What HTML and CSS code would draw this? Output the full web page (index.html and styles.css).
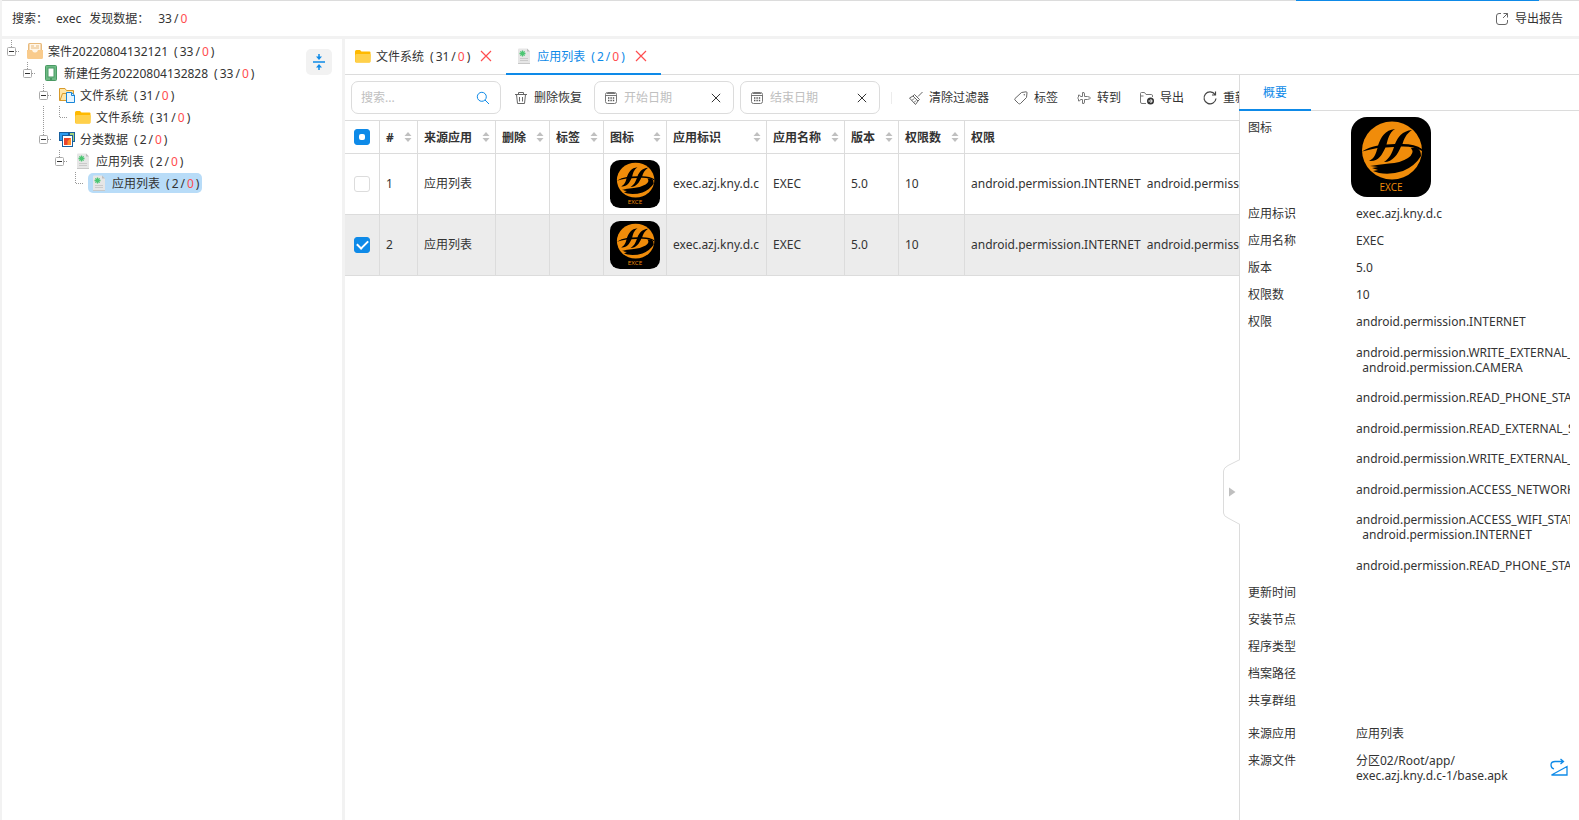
FILE: index.html
```
<!DOCTYPE html>
<html lang="zh-CN">
<head>
    <meta charset="UTF-8">
    <meta name="viewport" content="width=device-width, initial-scale=1.0">
    <title>数据分析</title>
    <link rel="stylesheet" href="styles.css">
</head>
<body>
    <!-- 公用图标 -->
    <svg class="symbols" aria-hidden="true">
        <symbol id="i-folder" viewBox="0 0 16 16">
            <path d="M0 3.500Q0 2 1.500 2H5l1.500 1.500H14.500Q15.500 3.500 15.500 4.500V13.500Q15.500 14.500 14.500 14.500H1.500Q0 14.500 0 13z" fill="#ffb900"/>
            <path d="M1.500 6H14.500Q16 6 15.800 7L15.200 13.500Q15 14.500 14 14.500H1.500Q.3 14.500.3 13.500V7.500Q.3 6 1.500 6z" fill="#ffd04a"/>
        </symbol>
        <symbol id="i-doc" viewBox="0 0 16 16">
            <path d="M2 1.500Q2 .5 3 .5H11L14 3.500V14.500Q14 15.500 13 15.500H3Q2 15.500 2 14.500z" fill="#e6e6e6"/>
            <path d="M11 .5V3.500H14z" fill="#bdbdbd"/>
            <path d="M2 15.500H14" stroke="#c8c8c8"/>
            <path d="M3.500 5.500h6M6.500 2.500v6M4.400 3.400L8.600 7.600M8.600 3.400L4.400 7.600" stroke="#4cc673" stroke-width="1.300"/>
            <path d="M4 10.500h8M4 12.500h8" stroke="#cacaca"/>
        </symbol>
        <symbol id="i-close" viewBox="0 0 12 12">
            <path d="M1 1L11 11M11 1L1 11" fill="none" stroke="currentColor" stroke-width="1.200"/>
        </symbol>
        <symbol id="i-calendar" viewBox="0 0 16 16">
            <g fill="none" stroke="#777"><rect x="2.500" y="2.500" width="11" height="11" rx="2"/><path d="M2.500 5.500h11M4 3.500h8"/></g>
            <path d="M5 8h1.400M7.400 8h1.400M9.800 8h1.400M5 10.500h1.400M7.400 10.500h1.400M9.800 10.500h1.400" stroke="#555" stroke-width="1.300"/>
        </symbol>
        <symbol id="i-minus" viewBox="0 0 16 22">
            <g fill="none" stroke="#999" stroke-dasharray="1 1"><path d="M5.500 0V7M10 11.500H14"/></g>
            <rect x="1.500" y="7.500" width="8" height="8" rx="1" fill="#fff" stroke="#aaa"/>
            <path d="M3 11.500H8" stroke="#333"/>
        </symbol>
        <symbol id="i-leaf" viewBox="0 0 16 22">
            <path d="M5.500 0V11.500H14" fill="none" stroke="#999" stroke-dasharray="1 1"/>
        </symbol>
        <symbol id="i-sort" viewBox="0 0 8 12">
            <path d="M4 1L7.500 5H.5zM4 11L7.500 7H.5z" fill="#c0c0c0"/>
        </symbol>
        <symbol id="i-app" viewBox="0 0 80 80" preserveAspectRatio="none">
            <rect width="80" height="80" rx="16"/>
            <ellipse cx="41" cy="33.500" rx="30" ry="29" fill="#f08c0a"/>
            <path d="M11 34.500Q18 30 27 28.500C30 20 34 13 44 12C38 16 37 22 35.500 27.500L44 27C47 20 51 14 61 13C55 17 53 22 51.500 27Q64 27 71 32L71 34Q63 29 50 29.500C47 37 42 45 33 45C39 41 41 36 43 30L34.500 30.500C31 38 27 45 18 44C24 41 25 36 26.500 31Q18 32.500 11 34.500z"/>
            <path d="M60 31Q64 36 57 41Q49 46 38 46.500Q27 47.500 19 49L27 50L21 51L27 53L22 54L28 56Q40 58 52 54Q64 49 70 39Q70 33 66 31z"/>
            <text x="40" y="74" text-anchor="middle" class="app-name">EXCE</text>
        </symbol>
    </svg>

    <header class="topbar">
        <span>搜索：</span>
        <span class="topbar-key">exec</span>
        <span>发现数据：</span>
        <span class="count"><span>33</span><span>/</span><b>0</b></span>
        <button class="report-btn" type="button">
            <svg width="14" height="14" viewBox="0 0 14 14"><path d="M6 1.500H4Q1.500 1.500 1.500 4V10Q1.500 12.500 4 12.500H10Q12.500 12.500 12.500 10V8M8.500 1.500H12.500V5.500M12.500 1.500L8 6" fill="none" stroke="#666"/></svg>
            导出报告
        </button>
    </header>

    <div class="layout">
        <aside class="sidebar">
            <div class="tree">
                <div class="node">
                    <svg class="toggle"><use href="#i-minus"/></svg>
                    <a class="node-label" href="#">
                        <svg width="16" height="16" viewBox="0 0 16 16"><rect x="1" y="0" width="14" height="9" rx="1.500" fill="#e8ba7c"/><rect x="2.500" y="1" width="11" height="8" fill="#fff6e8"/><path d="M4 3h3M9 3h3M4 5h8" stroke="#e8ba7c"/><path d="M0 7H5Q5.500 9.500 8 9.500T11 7H16V14.500Q16 16 14.500 16H1.500Q0 16 0 14.500z" fill="#f9cb8c"/></svg>
                        案件20220804132121
                        <span class="count"><span>(</span><span>33</span><span>/</span><b>0</b><span>)</span></span>
                    </a>
                </div>
                <div class="node">
                    <span class="indent"></span>
                    <svg class="toggle"><use href="#i-minus"/></svg>
                    <a class="node-label" href="#">
                        <svg width="16" height="16" viewBox="0 0 16 16"><rect x="2.500" y=".5" width="11" height="15" rx="1" fill="#6dba84" stroke="#4a9a64"/><rect x="5" y="3" width="6" height="9" fill="#fff" stroke="#4a9a64"/><path d="M7 14h2" stroke="#2f7246"/></svg>
                        新建任务20220804132828
                        <span class="count"><span>(</span><span>33</span><span>/</span><b>0</b><span>)</span></span>
                    </a>
                </div>
                <div class="node">
                    <span class="indent"></span><span class="indent"></span>
                    <svg class="toggle"><use href="#i-minus"/></svg>
                    <a class="node-label" href="#">
                        <svg width="16" height="16" viewBox="0 0 16 16"><path d="M.5 13.500V1.500H6L7.500 3.500H14.500V13.500z" fill="#ffe6a6" stroke="#d79a2b"/><path d="M1 13.500L3.500 6.500H15" fill="none" stroke="#d79a2b"/><path d="M7.500 5.500H12.500L15.500 8V15.500H7.500z" fill="#e6f5ff" stroke="#1886d8"/><path d="M12.500 5.500V8.500H15.500" fill="none" stroke="#1886d8"/></svg>
                        文件系统
                        <span class="count"><span>(</span><span>31</span><span>/</span><b>0</b><span>)</span></span>
                    </a>
                </div>
                <div class="node">
                    <span class="indent"></span><span class="indent"></span>
                    <span class="indent indent-line"></span>
                    <svg class="toggle"><use href="#i-leaf"/></svg>
                    <a class="node-label" href="#">
                        <svg width="16" height="16"><use href="#i-folder"/></svg>
                        文件系统
                        <span class="count"><span>(</span><span>31</span><span>/</span><b>0</b><span>)</span></span>
                    </a>
                </div>
                <div class="node">
                    <span class="indent"></span><span class="indent"></span>
                    <svg class="toggle"><use href="#i-minus"/></svg>
                    <a class="node-label" href="#">
                        <svg width="16" height="16" viewBox="0 0 16 16"><rect x=".5" y="1.500" width="9" height="8" fill="#2c9cf0" stroke="#185f9e"/><rect x="10.500" y="1.500" width="5" height="9" fill="#a4d07c" stroke="#185f9e"/><rect x="3.500" y="4.500" width="10" height="11" fill="#fff" stroke="#185f9e"/><rect x="5" y="7" width="7" height="7" fill="#e8452c"/><path d="M8.500 10L12 7V14H8.500z" fill="#ff8a2a"/></svg>
                        分类数据
                        <span class="count"><span>(</span><span>2</span><span>/</span><b>0</b><span>)</span></span>
                    </a>
                </div>
                <div class="node">
                    <span class="indent"></span><span class="indent"></span><span class="indent"></span>
                    <svg class="toggle"><use href="#i-minus"/></svg>
                    <a class="node-label" href="#">
                        <svg width="16" height="16"><use href="#i-doc"/></svg>
                        应用列表
                        <span class="count"><span>(</span><span>2</span><span>/</span><b>0</b><span>)</span></span>
                    </a>
                </div>
                <div class="node">
                    <span class="indent"></span><span class="indent"></span><span class="indent"></span><span class="indent"></span>
                    <svg class="toggle"><use href="#i-leaf"/></svg>
                    <a class="node-label selected" href="#">
                        <svg width="16" height="16"><use href="#i-doc"/></svg>
                        应用列表
                        <span class="count"><span>(</span><span>2</span><span>/</span><b>0</b><span>)</span></span>
                    </a>
                </div>
            </div>
            <button class="collapse-btn" type="button" aria-label="全部折叠">
                <svg width="14" height="18" viewBox="0 0 14 18"><path d="M1 9H13M7 1V5M7 17V13" stroke="#0e8ae8" stroke-width="1.500"/><path d="M4 3.500H10L7 7zM4 14.500H10L7 11z" fill="#0e8ae8"/></svg>
            </button>
        </aside>

        <main class="main">
            <nav class="tabs">
                <div class="tab">
                    <a href="#">
                        <svg width="16" height="16"><use href="#i-folder"/></svg>
                        文件系统
                        <span class="count"><span>(</span><span>31</span><span>/</span><b>0</b><span>)</span></span>
                    </a>
                    <button class="tab-close" type="button" aria-label="关闭"><svg width="12" height="12"><use href="#i-close"/></svg></button>
                </div>
                <div class="tab active">
                    <a href="#">
                        <svg width="16" height="16"><use href="#i-doc"/></svg>
                        应用列表
                        <span class="count"><span>(</span><span>2</span><span>/</span><b>0</b><span>)</span></span>
                    </a>
                    <button class="tab-close" type="button" aria-label="关闭"><svg width="12" height="12"><use href="#i-close"/></svg></button>
                </div>
            </nav>

            <div class="content">
                <section class="list">
                    <div class="toolbar">
                        <label class="field search">
                            <input type="text" placeholder="搜索..." aria-label="搜索">
                            <svg width="14" height="14" viewBox="0 0 14 14"><path d="M9 9L13 13" stroke="#0e8ae8"/><circle cx="5.800" cy="5.800" r="4.500" fill="none" stroke="#0e8ae8"/></svg>
                        </label>
                        <button class="tool" type="button">
                            <svg width="16" height="16" viewBox="0 0 16 16"><path d="M2 4.500H14M5.500 4V2.500H10.500V4M3.500 4.500L4.500 13.500H11.500L12.500 4.500M6.500 7V11.500M9.500 7V11.500" fill="none" stroke="#666"/></svg>
                            删除恢复
                        </button>
                        <label class="field date">
                            <svg width="16" height="16"><use href="#i-calendar"/></svg>
                            <input type="text" placeholder="开始日期" aria-label="开始日期">
                            <button type="button" aria-label="清空"><svg width="10" height="10"><use href="#i-close"/></svg></button>
                        </label>
                        <label class="field date">
                            <svg width="16" height="16"><use href="#i-calendar"/></svg>
                            <input type="text" placeholder="结束日期" aria-label="结束日期">
                            <button type="button" aria-label="清空"><svg width="10" height="10"><use href="#i-close"/></svg></button>
                        </label>
                        <span class="separator"></span>
                        <button class="tool tool-filter" type="button">
                            <svg width="16" height="16" viewBox="0 0 16 16"><path d="M14.500 2L10 6.500M6.500 4.500L11.500 9.500L10 11L5 6zM5 6L1.500 8L7.500 14.500L10 11M4 10.500L6 8.500M6 12.500L8 10.500" fill="none" stroke="#666"/></svg>
                            清除过滤器
                        </button>
                        <button class="tool" type="button">
                            <svg width="16" height="16" viewBox="0 0 16 16"><path d="M8.500 2.500L13 1.800Q14 1.700 14 2.800L13.500 7.500L7.500 13.500Q6.500 14.300 5.500 13.500L2 10Q1.300 9.200 2 8.500z" fill="none" stroke="#666"/><circle cx="11.300" cy="4.700" r=".7" fill="#666"/></svg>
                            标签
                        </button>
                        <button class="tool" type="button">
                            <svg width="16" height="16" viewBox="0 0 16 16"><path d="M6.500 2.500Q8.500 1.800 8.500 4V6.500H11.500Q14.500 7.300 14.500 8T11.500 9.500H8.500V12Q8.500 14.200 6.500 13.500V9.500H4.500L3.500 11H2.500V8.800L1.500 8L2.500 7.200V5H3.500L4.500 6.500H6.500z" fill="none" stroke="#777"/></svg>
                            转到
                        </button>
                        <button class="tool" type="button">
                            <svg width="16" height="16" viewBox="0 0 16 16"><path d="M7 13.500H3Q1.500 13.500 1.500 12V3.500Q1.500 2.500 2.500 2.500H5.500L7 4.500H12.500Q13.500 4.500 13.500 6V7M1.500 6H4.500" fill="none" stroke="#777"/><circle cx="11.500" cy="11" r="3.500" fill="#333"/><path d="M9.500 11H13M11.500 9L13.300 11L11.500 13" fill="none" stroke="#fff"/></svg>
                            导出
                        </button>
                        <button class="tool" type="button">
                            <svg width="16" height="16" viewBox="0 0 16 16"><path d="M13 4.500A6 6 0 1 0 14 8.500M13.500 1.500V5H10" fill="none" stroke="#444" stroke-width="1.200"/></svg>
                            重新加载
                        </button>
                    </div>

                    <table class="grid">
                        <colgroup>
                            <col class="c-check"><col class="c-no"><col class="c-md"><col class="c-sm"><col class="c-sm">
                            <col class="c-icon"><col class="c-lg"><col class="c-md"><col class="c-sm"><col class="c-num"><col>
                        </colgroup>
                        <thead>
                            <tr>
                                <th><input class="check partial" type="checkbox" aria-label="全选"></th>
                                <th><div>#<svg><use href="#i-sort"/></svg></div></th>
                                <th><div>来源应用<svg><use href="#i-sort"/></svg></div></th>
                                <th><div>删除<svg><use href="#i-sort"/></svg></div></th>
                                <th><div>标签<svg><use href="#i-sort"/></svg></div></th>
                                <th><div>图标<svg><use href="#i-sort"/></svg></div></th>
                                <th><div>应用标识<svg><use href="#i-sort"/></svg></div></th>
                                <th><div>应用名称<svg><use href="#i-sort"/></svg></div></th>
                                <th><div>版本<svg><use href="#i-sort"/></svg></div></th>
                                <th><div>权限数<svg><use href="#i-sort"/></svg></div></th>
                                <th><div>权限</div></th>
                            </tr>
                        </thead>
                        <tbody>
                            <tr>
                                <td><input class="check" type="checkbox" aria-label="选择第1行"></td>
                                <td>1</td>
                                <td>应用列表</td>
                                <td></td>
                                <td></td>
                                <td><svg class="app-icon"><use href="#i-app"/></svg></td>
                                <td>exec.azj.kny.d.c</td>
                                <td>EXEC</td>
                                <td>5.0</td>
                                <td>10</td>
                                <td>android.permission.INTERNET&nbsp; android.permission.WRITE_EXTERNAL_STORAGE</td>
                            </tr>
                            <tr class="selected">
                                <td><input class="check" type="checkbox" aria-label="选择第2行" checked></td>
                                <td>2</td>
                                <td>应用列表</td>
                                <td></td>
                                <td></td>
                                <td><svg class="app-icon"><use href="#i-app"/></svg></td>
                                <td>exec.azj.kny.d.c</td>
                                <td>EXEC</td>
                                <td>5.0</td>
                                <td>10</td>
                                <td>android.permission.INTERNET&nbsp; android.permission.WRITE_EXTERNAL_STORAGE</td>
                            </tr>
                        </tbody>
                    </table>
                </section>

                <aside class="detail">
                    <button class="drawer-handle" type="button" aria-label="收起">
                        <svg width="17" height="66" viewBox="0 0 17 66"><path d="M17 .5L5 6.500Q.5 9 .5 12V54Q.5 57 5 59L17 65.500" fill="#fff" stroke="#dcdcdc"/><path d="M6 28.500L12.500 33L6 37.500z" fill="#bfbfbf"/></svg>
                    </button>
                    <div class="detail-tabs"><a href="#">概要</a></div>
                    <dl class="props">
                        <div class="prop prop-icon"><dt>图标</dt><dd><svg width="80" height="80"><use href="#i-app"/></svg></dd></div>
                        <div class="prop"><dt>应用标识</dt><dd>exec.azj.kny.d.c</dd></div>
                        <div class="prop"><dt>应用名称</dt><dd>EXEC</dd></div>
                        <div class="prop"><dt>版本</dt><dd>5.0</dd></div>
                        <div class="prop"><dt>权限数</dt><dd>10</dd></div>
                        <div class="prop">
                            <dt>权限</dt>
                            <dd class="permissions">
                                <p>android.permission.INTERNET</p>
                                <p>android.permission.WRITE_EXTERNAL_STORAGE<br>&nbsp; android.permission.CAMERA</p>
                                <p>android.permission.READ_PHONE_STATE</p>
                                <p>android.permission.READ_EXTERNAL_STORAGE</p>
                                <p>android.permission.WRITE_EXTERNAL_STORAGE</p>
                                <p>android.permission.ACCESS_NETWORK_STATE</p>
                                <p>android.permission.ACCESS_WIFI_STATE<br>&nbsp; android.permission.INTERNET</p>
                                <p>android.permission.READ_PHONE_STATE</p>
                            </dd>
                        </div>
                        <div class="prop"><dt>更新时间</dt><dd></dd></div>
                        <div class="prop"><dt>安装节点</dt><dd></dd></div>
                        <div class="prop"><dt>程序类型</dt><dd></dd></div>
                        <div class="prop"><dt>档案路径</dt><dd></dd></div>
                        <div class="prop"><dt>共享群组</dt><dd></dd></div>
                    </dl>
                    <dl class="props source">
                        <div class="prop"><dt>来源应用</dt><dd>应用列表</dd></div>
                        <div class="prop">
                            <dt>来源文件</dt>
                            <dd>分区02/Root/app/<br>exec.azj.kny.d.c-1/base.apk
                            </dd>
                            <dd class="jump-cell">
                                <button type="button" aria-label="跳转到源文件">
                                    <svg width="18" height="18" viewBox="0 0 18 18"><path d="M4 11Q1 10 1 7Q1 3.500 5 3.500H13M10.500 1L13.500 3.500L10.500 6M17 8.500V17H1.500z" fill="none" stroke="#0e8ae8" stroke-width="1.300"/></svg>
                                </button>
                            </dd>
                        </div>
                    </dl>
                </aside>
            </div>
        </main>
    </div>
</body>
</html>
```
FILE: styles.css
```
*{ box-sizing: border-box;}
html, body{ height: 100%;}
body{
    margin: 0;
    padding-left: 2px;
    display: flex;
    flex-direction: column;
    overflow: hidden;
    background: #f2f2f2;
    color: #333;
    font: 12px/15px "Noto Sans", "Noto Sans CJK SC", sans-serif;
}
a{
    color: inherit;
    text-decoration: none;
}
button{
    padding: 0;
    border: 0;
    background: none;
    color: inherit;
    font: inherit;
    white-space: nowrap;
}
svg{
    display: block;
    flex: none;
}
.symbols{
    position: absolute;
    width: 0;
    height: 0;
}
.app-name{
    font: 10px "Open Sans", sans-serif;
    fill: #f08c0a;
}

/* 数量 (33/0) */
.count{
    display: inline-flex;
    gap: 2px;
    margin-left: 1px;
}
.count b{
    color: #ff4d4f;
    font-weight: normal;
}

/* 顶部 */
.topbar{
    flex: none;
    display: flex;
    align-items: center;
    height: 36px;
    padding: 0 16px 0 10px;
    border-top: 1px solid #dcdcdc;
    background: #fff;
}
/* 顶部蓝色进度条 */
.topbar::before{
    content: "";
    position: absolute;
    top: 0;
    right: 40px;
    width: 243px;
    height: 1px;
    background: #0e8ae8;
}
.topbar-key{ margin: 0 8px;}
.topbar .count{ margin-left: 9px;}
.report-btn{
    display: flex;
    align-items: center;
    gap: 6px;
    margin-left: auto;
}

.layout{
    flex: 1;
    display: flex;
    gap: 3px;
    min-height: 0;
    margin-top: 3px;
}

/* 左侧树 */
.sidebar{
    flex: none;
    display: flex;
    align-items: flex-start;
    width: 340px;
    padding: 1px 10px 0 4px;
    background: #fff;
}
.tree{ flex: 1;}
.node{
    display: flex;
    align-items: center;
    height: 22px;
}
.indent{
    width: 16px;
    height: 22px;
}
.indent-line::before{
    content: "";
    display: block;
    width: 1px;
    height: 22px;
    margin-left: 5px;
    background: repeating-linear-gradient(#999 0 1px, transparent 1px 2px);
}
.toggle{
    width: 16px;
    height: 22px;
    margin-right: 2px;
}
.node-label{
    display: flex;
    align-items: center;
    gap: 5px;
    height: 20px;
    padding: 0 3px;
    border-radius: 5px;
    white-space: nowrap;
}
.node-label.selected{ background: #b8dcf8;}
.collapse-btn{
    display: flex;
    align-items: center;
    justify-content: center;
    width: 26px;
    height: 26px;
    margin-top: 9px;
    border-radius: 5px;
    background: #f2f2f2;
}

/* 标签页 */
.main{
    flex: 1;
    display: flex;
    flex-direction: column;
    min-width: 0;
    background: #fff;
}
.tabs{
    flex: none;
    display: flex;
    height: 36px;
    border-bottom: 1px solid #dcdcdc;
}
.tab{
    display: flex;
    align-items: center;
    gap: 10px;
    height: 36px;
    padding: 0 14px 2px 10px;
}
.tab a{
    display: flex;
    align-items: center;
    gap: 5px;
}
.tab.active{
    padding-bottom: 0;
    border-bottom: 2px solid #0e8ae8;
    color: #0e8ae8;
}
.tab-close{ color: #ff4d4f;}

.content{
    flex: 1;
    display: flex;
    min-height: 0;
}
.list{
    flex: 1;
    min-width: 0;
    overflow: hidden;
}

/* 工具栏 */
.toolbar{
    display: flex;
    align-items: center;
    gap: 6px;
    height: 45px;
    padding: 0 6px;
}
.field{
    flex: none;
    display: flex;
    align-items: center;
    height: 33px;
    border: 1px solid #dcdcdc;
    border-radius: 7px;
}
.field input{
    flex: 1;
    min-width: 0;
    padding: 0;
    border: 0;
    outline: 0;
    background: none;
    font: inherit;
}
.field input::placeholder{ color: #c0c0c0;}
.search{
    width: 150px;
    padding: 0 10px 0 9px;
}
.date{
    gap: 5px;
    width: 140px;
    padding: 0 12px 0 8px;
}
.tool{
    flex: none;
    display: flex;
    align-items: center;
    gap: 5px;
    height: 33px;
    padding: 0 6px;
}
.separator{
    flex: none;
    width: 1px;
    height: 12px;
    margin: 0 4px 0 5px;
    background: #ececec;
}
.tool-filter{ margin-right: 6px;}

/* 表格 */
.grid{
    width: 100%;
    table-layout: fixed;
    border-collapse: separate;
    border-spacing: 0;
    border-top: 1px solid #dcdcdc;
}
.c-check{ width: 35px;}
.c-no{ width: 38px;}
.c-sm{ width: 54px;}
.c-icon{ width: 63px;}
.c-num{ width: 66px;}
.c-md{ width: 78px;}
.c-lg{ width: 100px;}
.grid th, .grid td{
    padding: 0 0 0 6px;
    border-right: 1px solid #dcdcdc;
    border-bottom: 1px solid #dcdcdc;
    text-align: left;
    white-space: nowrap;
    overflow: hidden;
}
.grid th{ height: 33px;}
.grid td{
    height: 61px;
    padding-bottom: 1px;
}
.grid th:first-child, .grid td:first-child{ padding-left: 9px;}
.grid th:last-child, .grid td:last-child{ border-right: 0;}
.grid th div{
    display: flex;
    align-items: center;
    justify-content: space-between;
    padding-right: 5px;
}
.grid th svg{
    width: 8px;
    height: 12px;
}
.grid .selected{ background: #ececec;}
.grid .app-icon{
    width: 50px;
    height: 48px;
}
.check{
    appearance: none;
    display: block;
    width: 16px;
    height: 16px;
    margin: 0;
    border: 1px solid #dcdcdc;
    border-radius: 3px;
    background: #fff;
}
.check:checked, .check.partial{
    display: flex;
    align-items: center;
    justify-content: center;
    border-color: #0e8ae8;
    background: #0e8ae8;
}
.check:checked::before{
    content: "";
    width: 9px;
    height: 5px;
    margin-bottom: 3px;
    border: solid #fff;
    border-width: 0 0 2px 2px;
    transform: rotate(-45deg);
}
.check.partial::before{
    content: "";
    width: 6px;
    height: 6px;
    border-radius: 2px;
    background: #fff;
}

/* 右侧详情 */
.detail{
    position: relative;
    flex: none;
    width: 340px;
    border-left: 1px solid #dcdcdc;
}
.drawer-handle{
    position: absolute;
    left: -17px;
    top: 384px;
}
.detail-tabs{
    height: 36px;
    border-bottom: 1px solid #dcdcdc;
}
.detail-tabs a{
    display: block;
    width: 72px;
    height: 36px;
    margin-left: -1px;
    border-bottom: 2px solid #0e8ae8;
    color: #0e8ae8;
    line-height: 36px;
    text-align: center;
}
.props{
    margin: 0;
    padding: 0 9px 0 8px;
}
.source{ margin-top: 6px;}
.prop{
    display: flex;
    padding: 6px 0;
}
.prop dt{
    flex: none;
    width: 108px;
}
.prop dd{
    flex: 1;
    min-width: 0;
    margin: 0;
    overflow: hidden;
    white-space: nowrap;
}
.prop-icon{
    padding-bottom: 3px;
    line-height: 22px;
}
.prop-icon dt{ width: 103px;}
.permissions p{ margin: 0 0 15px;}
.permissions p:nth-child(odd){ margin-bottom: 16px;}
.permissions p:last-child{ margin-bottom: 0;}
.prop .jump-cell{
    flex: none;
    align-self: center;
    margin-right: 2px;
}
```
